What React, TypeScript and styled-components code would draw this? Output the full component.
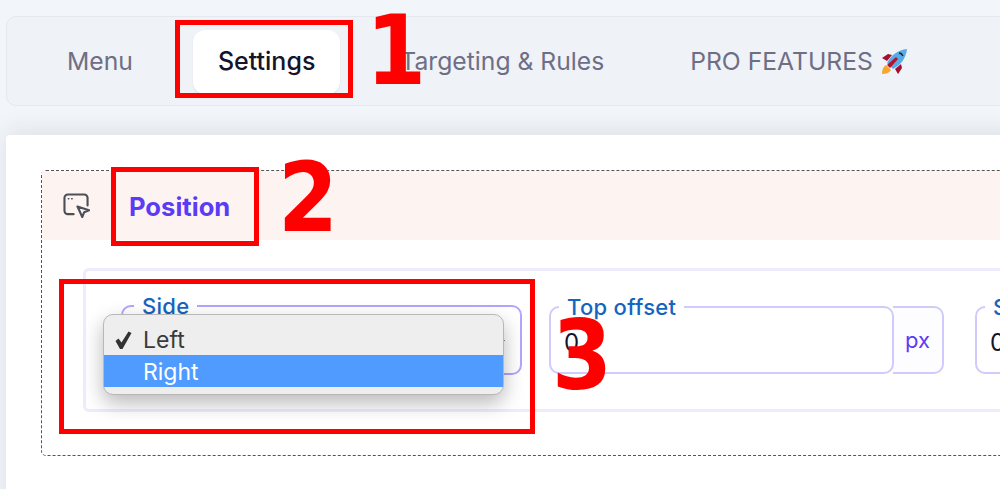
import * as React from "react";
import styled, { createGlobalStyle } from "styled-components";

const GlobalStyle = createGlobalStyle`
    html, body {
        margin: 0;
        width: 1000px;
        height: 489px;
        overflow: hidden;
        background: #f2f5f9;
        font-family: Inter, "Liberation Sans", sans-serif;
    }
`;

const Page = styled.div`
    position: relative;
    width: 1000px;
    height: 489px;
    overflow: hidden;
    padding: 16px 0 0 6px;
    box-sizing: border-box;
`;

const TabBar = styled.div`
    display: flex;
    gap: 34px;
    width: 1040px;
    height: 90px;
    box-sizing: border-box;
    padding: 13px 34px;
    background: #eff2f7;
    border: 1px solid #e5e8ee;
    border-radius: 10px;
`;

const Tab = styled.div<{active?:boolean}>`
    display: flex;
    align-items: center;
    gap: 8px;
    height: 64px;
    box-sizing: border-box;
    padding: 0 ${props=>props.active ? 25 : 26}px 2px;
    border-radius: 12px;
    font-size: ${props=>props.active ? 25 : 24.7}px;
    font-weight: ${props=>props.active ? 500 : 400};
    color: ${props=>props.active ? "#14142b" : "#6e6e85"};
    background: ${props=>props.active ? "#fff" : "transparent"};
    box-shadow: ${props=>props.active ? "0 1px 2px rgba(0,0,0,0.08)" : "none"};
    white-space: nowrap;
`;

const Card = styled.div`
    width: 1040px;
    height: 400px;
    margin-top: 29px;
    box-sizing: border-box;
    padding: 35px;
    background: #fff;
    border-radius: 4px;
    box-shadow: 0 -4px 24px rgba(40,50,70,0.1);
`;

const Section = styled.div`
    width: 1040px;
    height: 286px;
    box-sizing: border-box;
    border: 1px dashed #555;
    border-radius: 5px;
`;

const SectionHeader = styled.div`
    display: flex;
    align-items: center;
    gap: 39px;
    height: 69px;
    padding-left: 21px;
    background: #fdf4f2;
`;

const SectionTitle = styled.h2`
    margin: 2px 0 0;
    font-size: 25.6px;
    font-weight: 700;
    color: #5b3bf5;
`;

const SectionBody = styled.div`
    padding: 28px 0 0 41px;
`;

const FieldPanel = styled.div`
    display: flex;
    align-items: flex-start;
    gap: 27px;
    width: 1000px;
    height: 144px;
    box-sizing: border-box;
    padding: 23px 35px 0;
    border: 3px solid #eeebfd;
    border-radius: 6px;
`;

const Field = styled.fieldset<{width:number,focused?:boolean}>`
    position: relative;
    display: flex;
    align-items: center;
    flex-shrink: 0;
    width: ${props=>props.width}px;
    height: ${props=>props.focused ? 81 : 79}px;
    box-sizing: border-box;
    margin: 0;
    padding: 0 13px 6px;
    border: 2px solid ${props=>props.focused ? "#b3a5fb" : "#cfcbfb"};
    border-radius: 10px;
`;

const Legend = styled.legend<{inset:number}>`
    margin-left: ${props=>props.inset}px;
    padding: 0 8px;
    font-size: 22px;
    line-height: 24px;
    font-weight: 500;
    letter-spacing: 0.3px;
    color: #1565c0;
`;

const InputGroup = styled.div`
    display: flex;
    flex-shrink: 0;
    align-items: flex-end;
    height: 79px;
    margin-top: 1px;
`;

const NextGroup = styled(InputGroup)`
    margin-left: 4px;
`;

const Value = styled.span`
    font-size: 24px;
    color: #14142b;
`;

const Unit = styled.div`
    display: flex;
    align-items: center;
    justify-content: center;
    width: 51px;
    height: 68px;
    box-sizing: border-box;
    margin-left: -1px;
    border: 2px solid #cfcbfb;
    border-left: none;
    border-radius: 0 10px 10px 0;
    background: #fdfdff;
    font-size: 22px;
    color: #5b3bf5;
`;

const Caret = styled.div`
    margin-left: auto;
    margin-right: 2px;
    width: 0;
    height: 0;
    border-left: 5px solid transparent;
    border-right: 5px solid transparent;
    border-top: 6px solid #333;
`;

const Menu = styled.div`
    position: absolute;
    left: -20px;
    top: -4px;
    width: 401px;
    height: 81px;
    box-sizing: border-box;
    padding-top: 8px;
    background: #eeeeee;
    border: 1px solid #b8b8b8;
    border-radius: 10px;
    box-shadow: 0 8px 20px rgba(0,0,0,0.28);
`;

const MenuItem = styled.div<{selected?:boolean}>`
    display: flex;
    align-items: center;
    height: 32px;
    box-sizing: border-box;
    padding: 2px 0 0 39px;
    position: relative;
    font-size: 23px;
    color: ${props=>props.selected ? "#fff" : "#3a3a3a"};
    background: ${props=>props.selected ? "#4f9bff" : "transparent"};
`;

const Check = styled.svg`
    position: absolute;
    left: 9px;
    top: 7px;
    width: 21px;
    height: 20px;
`;

const Highlight = styled.div<{x:number,y:number,w:number,h:number}>`
    position: absolute;
    left: ${props=>props.x}px;
    top: ${props=>props.y}px;
    width: ${props=>props.w}px;
    height: ${props=>props.h}px;
    box-sizing: border-box;
    border: 5px solid #ff0000;
`;

const Digit = styled.div<{x:number,y:number}>`
    position: absolute;
    left: ${props=>props.x}px;
    top: ${props=>props.y}px;
    font-family: "DejaVu Sans", sans-serif;
    font-stretch: condensed;
    font-size: 96px;
    line-height: 96px;
    font-weight: 700;
    color: #ff0000;
`;

const PositionIcon = () => (
    <svg width="27" height="25" viewBox="0 0 28 26" fill="none" stroke="#4b4f58" strokeWidth="2.2" strokeLinecap="round" strokeLinejoin="round">
        <path d="M11 22H5a3.5 3.5 0 0 1-3.5-3.5V5A3.5 3.5 0 0 1 5 1.5h17A3.5 3.5 0 0 1 25.5 5v8"/>
        <path d="M15 14l12 4-5 2-2 5z"/>
        <path d="M5.5 6h.5M9 6h.5" strokeWidth="1.6"/>
    </svg>
);

const RocketIcon = () => (
    <svg width="27" height="27" viewBox="0 0 27 27">
        <path d="M1 26c0-4 1-7 4-9l5 5c-2 3-5 4-9 4z" fill="#f7a72b"/>
        <path d="M1 10l6-4 4 1-5 6z" fill="#a50e2d"/>
        <path d="M17 26l4-6-1-4-6 5z" fill="#a50e2d"/>
        <path d="M6 15C10 7 17 2 26 1c-1 9-6 16-14 20z" fill="#56ace6"/>
        <path d="M6 17l9-8 2 2-8 9z" fill="#b5122f"/>
        <path d="M18 5c2 0 3 1 4 3" stroke="#222" strokeWidth="1.3" fill="none"/>
    </svg>
);

const App = () => {
    return(
        <Page>
            <GlobalStyle/>
            <TabBar>
                <Tab>Menu</Tab>
                <Tab active>Settings</Tab>
                <Tab>Targeting &amp; Rules</Tab>
                <Tab>PRO FEATURES <RocketIcon/></Tab>
            </TabBar>
            <Card>
                <Section>
                    <SectionHeader>
                        <PositionIcon/>
                        <SectionTitle>Position</SectionTitle>
                    </SectionHeader>
                    <SectionBody>
                        <FieldPanel>
                            <Field width={401} focused>
                                <Legend inset={-2}>Side</Legend>
                                <Caret/>
                                <Menu>
                                    <MenuItem>
                                        <Check viewBox="0 0 20 20">
                                            <path d="M2 11l3-2.5 3 4L15 1.5l3 1.5-9 16h-2.5z" fill="#333"/>
                                        </Check>
                                        Left
                                    </MenuItem>
                                    <MenuItem selected>Right</MenuItem>
                                </Menu>
                            </Field>
                            <InputGroup>
                                <Field width={345}>
                                    <Legend inset={-5}>Top offset</Legend>
                                    <Value>0</Value>
                                </Field>
                                <Unit>px</Unit>
                            </InputGroup>
                            <NextGroup>
                                <Field width={345}>
                                    <Legend inset={-5}>Side offset</Legend>
                                    <Value>0</Value>
                                </Field>
                            </NextGroup>
                        </FieldPanel>
                    </SectionBody>
                </Section>
            </Card>
            <Highlight x={175} y={20} w={178} h={78}/>
            <Highlight x={111} y={167} w={148} h={79}/>
            <Highlight x={59} y={279} w={476} h={155}/>
            <Digit x={366} y={3}>1</Digit>
            <Digit x={278} y={150}>2</Digit>
            <Digit x={552} y={308}>3</Digit>
        </Page>
    )
}

export default App;
